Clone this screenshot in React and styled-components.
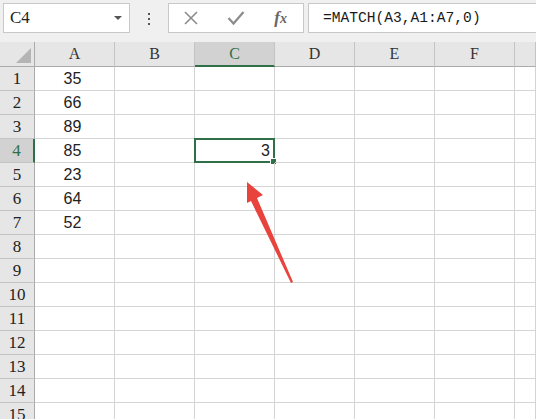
import React from 'react';
import styled, { createGlobalStyle } from 'styled-components';

const GREEN = '#2f7048';
const COLS = ['A', 'B', 'C', 'D', 'E', 'F', ''];
const VALUES = { 1: '35', 2: '66', 3: '89', 4: '85', 5: '23', 6: '64', 7: '52' };

const Global = createGlobalStyle`
	html, body {
		margin: 0;
		padding: 0;
		background: #fff;
		overflow: hidden;
	}
`;

const Page = styled.div`
	position: relative;
	width: 536px;
	height: 419px;
	overflow: hidden;
	background: #fff;
	font-family: 'Liberation Serif', serif;
`;

const Toolbar = styled.div`
	display: flex;
	align-items: flex-start;
	height: 42px;
	padding: 3px 0 0 3px;
	box-sizing: border-box;
	background: #f0f0f0;
`;

const NameBox = styled.div`
	display: flex;
	align-items: center;
	justify-content: space-between;
	width: 127px;
	height: 30px;
	box-sizing: border-box;
	padding: 0 7px 0 6px;
	background: #fff;
	border: 1px solid #c8c8c8;
	font-size: 17px;
	color: #222;
`;

const Caret = styled.span`
	width: 0;
	height: 0;
	border-left: 4px solid transparent;
	border-right: 4px solid transparent;
	border-top: 4px solid #555;
`;

const Dots = styled.div`
	display: flex;
	flex-direction: column;
	align-items: center;
	gap: 3px;
	width: 38px;
	padding-top: 10px;

	span {
		width: 2px;
		height: 2px;
		background: #555;
	}
`;

const ButtonBox = styled.div`
	display: flex;
	align-items: center;
	width: 136px;
	height: 30px;
	box-sizing: border-box;
	background: #fff;
	border: 1px solid #c8c8c8;
`;

const IconSlot = styled.div`
	display: flex;
	align-items: center;
	justify-content: center;
	width: 45px;
	height: 100%;
	color: ${(p) => p.$color || '#8a8a8a'};
	font-style: italic;
	font-weight: bold;
	font-size: 17px;

	small {
		font-size: 14px;
	}
`;

const FormulaBar = styled.div`
	flex: 1;
	display: flex;
	align-items: center;
	height: 30px;
	margin-left: 4px;
	padding-left: 14px;
	box-sizing: border-box;
	background: #fff;
	border: 1px solid #c8c8c8;
	border-right: none;
	font-family: 'Liberation Mono', monospace;
	font-size: 14.6px;
	color: #1a1a1a;
`;

const Sheet = styled.div`
	display: grid;
	grid-template-columns: 35px repeat(6, 80px) 1fr;
	grid-template-rows: 25px;
	grid-auto-rows: 24px;
`;

const Corner = styled.div`
	position: relative;
	box-sizing: border-box;
	background: #e6e6e6;
	border-right: 1px solid #ababab;
	border-bottom: 1px solid #ababab;

	&::after {
		content: '';
		position: absolute;
		right: 3px;
		bottom: 3px;
		border-left: 15px solid transparent;
		border-bottom: 15px solid #b4b4b4;
	}
`;

const ColHead = styled.div`
	display: flex;
	align-items: center;
	justify-content: center;
	box-sizing: border-box;
	background: ${(p) => (p.$active ? '#d2d2d2' : '#e6e6e6')};
	border-right: 1px solid #c4c4c4;
	border-bottom: ${(p) => (p.$active ? `2px solid ${GREEN}` : '1px solid #ababab')};
	color: ${(p) => (p.$active ? GREEN : '#333')};
	font-size: 16px;
	padding-top: ${(p) => (p.$active ? '1px' : '0')};
`;

const RowHead = styled.div`
	display: flex;
	align-items: center;
	justify-content: center;
	box-sizing: border-box;
	background: ${(p) => (p.$active ? '#d2d2d2' : '#e6e6e6')};
	border-right: ${(p) => (p.$active ? `2px solid ${GREEN}` : '1px solid #ababab')};
	border-bottom: 1px solid #c4c4c4;
	color: ${(p) => (p.$active ? GREEN : '#222')};
	font-size: 17px;
`;

const Cell = styled.div`
	position: relative;
	display: flex;
	align-items: center;
	justify-content: ${(p) => (p.$align === 'right' ? 'flex-end' : 'center')};
	box-sizing: border-box;
	padding-right: 4px;
	border-right: 1px solid #d4d4d4;
	border-bottom: 1px solid #d4d4d4;
	font-family: 'Liberation Sans', sans-serif;
	font-size: 16px;
	color: #222;
`;

const Selection = styled.div`
	position: absolute;
	left: -1px;
	top: -1px;
	right: -1px;
	bottom: -1px;
	border: 2px solid ${GREEN};
	pointer-events: none;
`;

const Handle = styled.div`
	position: absolute;
	right: -4px;
	bottom: -4px;
	width: 5px;
	height: 5px;
	background: ${GREEN};
	border: 1px solid #fff;
`;

const Arrow = styled.svg`
	position: absolute;
	left: 0;
	top: 0;
	pointer-events: none;
`;

const App = () => {
	const rows = Array.from({ length: 15 }, (_, i) => i + 1);

	return (
		<Page>
			<Global />
			<Toolbar>
				<NameBox>
					<span>C4</span>
					<Caret />
				</NameBox>
				<Dots>
					<span />
					<span />
					<span />
				</Dots>
				<ButtonBox>
					<IconSlot>
						<svg width="16" height="16" viewBox="0 0 16 16">
							<path d="M2 2 L14 14 M14 2 L2 14" stroke="#8c8c8c" strokeWidth="1.6" fill="none" />
						</svg>
					</IconSlot>
					<IconSlot>
						<svg width="18" height="16" viewBox="0 0 18 16">
							<path d="M1.5 8 L6.5 13.5 L16.5 2" stroke="#8c8c8c" strokeWidth="2.2" fill="none" />
						</svg>
					</IconSlot>
					<IconSlot $color="#666">
						<span>
							f<small>x</small>
						</span>
					</IconSlot>
				</ButtonBox>
				<FormulaBar>=MATCH(A3,A1:A7,0)</FormulaBar>
			</Toolbar>

			<Sheet>
				<Corner />
				{COLS.map((c, i) => (
					<ColHead key={i} $active={c === 'C'}>
						{c}
					</ColHead>
				))}
				{rows.map((r) => (
					<React.Fragment key={r}>
						<RowHead $active={r === 4}>{r}</RowHead>
						{COLS.map((c, i) => {
							const active = r === 4 && c === 'C';
							return (
								<Cell key={i} $align={active ? 'right' : 'center'}>
									{c === 'A' && VALUES[r]}
									{active && '3'}
									{active && (
										<Selection>
											<Handle />
										</Selection>
									)}
								</Cell>
							);
						})}
					</React.Fragment>
				))}
			</Sheet>

			<Arrow width="536" height="419" viewBox="0 0 536 419">
				<polygon points="247,182 263,195 257,198 293,282 291,283 251,201 247,203" fill="#e8433d" />
			</Arrow>
		</Page>
	);
};

export default App;
